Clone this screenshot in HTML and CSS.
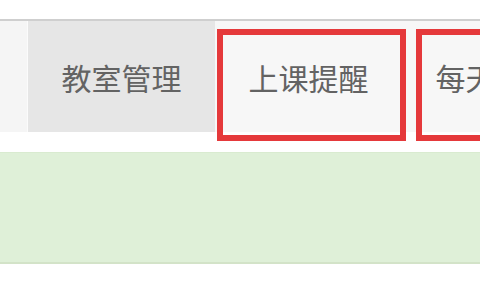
FILE: index.html
```html
<!DOCTYPE html>
<html lang="zh-CN">
<head>
<meta charset="utf-8">
<title>上课提醒</title>
<link rel="stylesheet" href="styles.css">
</head>
<body>
<div class="page">
  <nav class="navbar">
    <div class="nav-lead"></div>
    <a class="tab tab-active">教室管理</a>
    <a class="tab">上课提醒</a>
    <a class="tab">每天提醒</a>
    <div class="mark mark-one"></div>
    <div class="mark mark-two"></div>
  </nav>
  <div class="alert"></div>
</div>
</body>
</html>
```

FILE: styles.css
```css
html, body {
  margin: 0;
  padding: 0;
  background: #ffffff;
}
body {
  width: 480px;
  height: 300px;
  overflow: hidden;
  font-family: "Noto Sans CJK SC", "Noto Sans", sans-serif;
}
.page {
  padding-top: 19px;
}
.navbar {
  position: relative;
  display: flex;
  height: 111px;
  border-top: 2px solid #cfcfcf;
  background: #f7f7f7;
}
.nav-lead {
  width: 28px;
  flex: none;
  background: #f5f5f5;
  border-right: 1px solid #fbfbfb;
  box-sizing: border-box;
}
.tab {
  flex: none;
  width: 187px;
  display: flex;
  align-items: center;
  justify-content: center;
  font-size: 30px;
  color: #636363;
  white-space: nowrap;
  text-decoration: none;
}
.tab-active {
  background: #e6e6e6;
}
.mark {
  position: absolute;
  top: 8px;
  height: 112px;
  border: 6px solid #e5393b;
  box-sizing: border-box;
}
.mark-one {
  left: 217px;
  width: 189px;
}
.mark-two {
  left: 416px;
  width: 189px;
}
.alert {
  margin-top: 20px;
  height: 112px;
  box-sizing: border-box;
  background: #dff0d8;
  border-top: 1px solid #d9ebd0;
  border-bottom: 2px solid #d3e3c8;
}
```
